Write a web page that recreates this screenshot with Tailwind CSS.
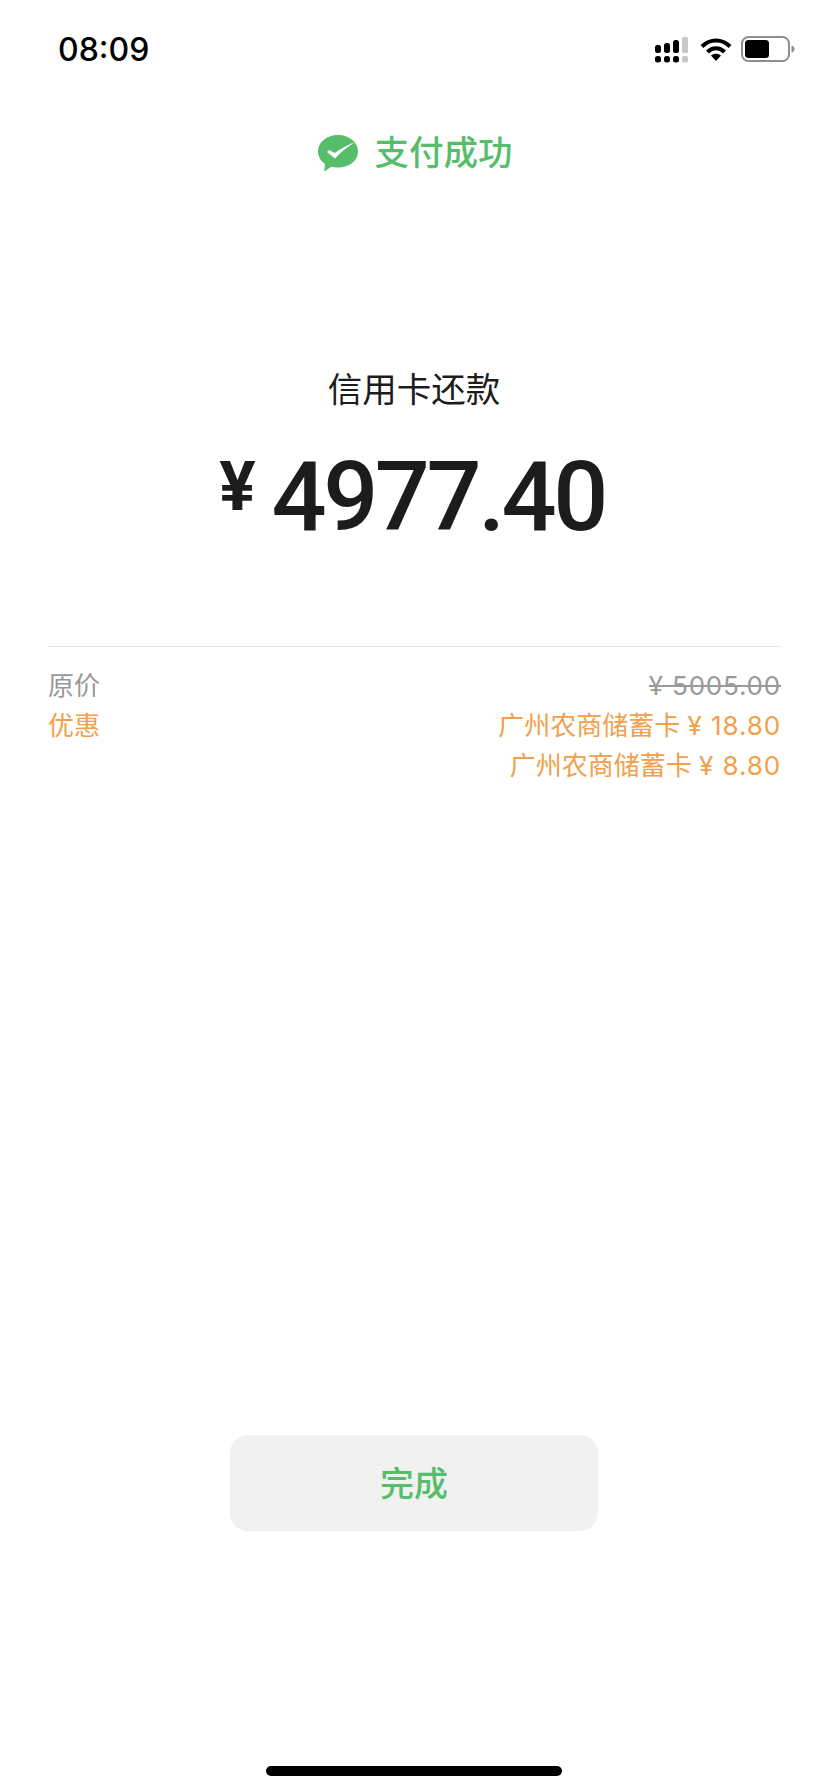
<!DOCTYPE html>
<html lang="zh-CN">
<head>
    <meta charset="UTF-8">
    <meta name="viewport" content="width=device-width, initial-scale=1.0">
    <title>支付成功</title>
    <script src="https://cdn.jsdelivr.net/npm/@tailwindcss/browser@4"></script>
</head>
<body class="bg-white">
    <div class="w-[828px] h-[1792px] flex flex-col overflow-hidden bg-white font-['Inter','Noto_Sans_CJK_SC',sans-serif]">
        <!-- status bar -->
        <div class="h-[100px] pl-[58px] pr-[33px] flex items-start justify-between">
            <span class="mt-[30px] text-[32px] leading-[40px] font-medium text-black">08:09</span>
            <div class="mt-[35px] flex items-center">
                <svg width="33" height="28" viewBox="0 0 33 28" fill="#000">
                    <rect x="0" y="10" width="6" height="8" rx="2.500"/>
                    <rect x="9" y="8" width="6" height="10" rx="2.500"/>
                    <rect x="18" y="5" width="6" height="13" rx="2.500"/>
                    <rect x="27" y="2" width="6" height="16" rx="1.500" fill="#c8c8c8"/>
                    <rect x="0" y="21" width="6" height="6.500" rx="2.500"/>
                    <rect x="9" y="21" width="6" height="6.500" rx="2.500"/>
                    <rect x="18" y="21" width="6" height="6.500" rx="2.500"/>
                    <rect x="27" y="21" width="6" height="6.500" rx="1.500" fill="#c8c8c8"/>
                </svg>
                <svg class="ml-[12px]" width="32" height="24" viewBox="0 0 32 24" fill="none" stroke="#000" stroke-width="4.2">
                    <path d="M2 9.500C10 1.500 22 1.500 30 9.500"/>
                    <path d="M7.500 15C12.500 10 19.500 10 24.500 15"/>
                    <path d="M16 24L11 18.500C14 16 18 16 21 18.500Z" fill="#000" stroke="none"/>
                </svg>
                <svg class="ml-[9px]" width="54" height="26" viewBox="0 0 54 26" fill="none">
                    <rect x="1" y="1" width="47" height="24" rx="6.500" stroke="#8e8e8e" stroke-width="2"/>
                    <rect x="4" y="4" width="24" height="18" rx="3.500" fill="#000"/>
                    <path d="M50.500 9.500C52.500 10 53.500 11.500 53.500 13C53.500 14.500 52.500 16 50.500 16.500Z" fill="#8e8e8e"/>
                </svg>
            </div>
        </div>

        <!-- payment result title -->
        <div class="mt-[31px] pl-[2px] flex items-center justify-center">
            <svg width="40" height="38" viewBox="0 0 40 38">
                <path d="M20 1C31 1 40 8 40 17.500C40 27 31 33.500 20 33.500C17.500 33.500 15.500 33.200 13.500 32.500L7 37C6.500 37.300 6 37 6.200 36.500L7 30C3 27 0 23 0 17.500C0 8 9 1 20 1Z" fill="#56bd6b"/>
                <path d="M9 18L11 16L17 19C22 15 29 11 37 8C29 13 22 19 17 24.500Z" fill="#fff"/>
            </svg>
            <span class="ml-[17px] text-[34.5px] leading-[44px] font-medium text-[#56bd6b]">支付成功</span>
        </div>

        <!-- amount -->
        <div class="mt-[193px] text-center text-[34.5px] leading-[44px] text-[#1c1c1c]">信用卡还款</div>
        <div class="mt-[29px] pr-[4px] h-[112px] flex items-center justify-center">
            <span class="mb-[20px] text-[68px] leading-[60px] font-bold text-[#1c1c1c] font-['Roboto',sans-serif]">¥</span>
            <span class="ml-[16px] text-[97px] leading-[112px] font-medium text-[#1c1c1c] font-['Roboto',sans-serif] tracking-[-3.500px]">4977.40</span>
        </div>

        <!-- price detail -->
        <div class="ml-[48px] mr-[47px] mt-[93px] pt-[19px] border-t border-[#e6e6e6] text-[26px] leading-[40px]">
            <div class="flex justify-between text-[#999999]">
                <span>原价</span>
                <span class="line-through tracking-[0.8px]">¥ 5005.00</span>
            </div>
            <div class="flex justify-between text-[#f2a04b]">
                <span>优惠</span>
                <div class="text-right">
                    <div>广州农商储蓄卡 <span class="tracking-[0.9px]">¥ 18.80</span></div>
                    <div>广州农商储蓄卡 <span class="tracking-[0.9px]">¥ 8.80</span></div>
                </div>
            </div>
        </div>

        <div class="flex-1"></div>

        <!-- done button -->
        <button class="self-center w-[368px] h-[96px] rounded-[18px] bg-[#f1f1f1] text-[34px] font-medium text-[#56bd6b]">完成</button>

        <!-- home indicator -->
        <div class="mt-[235px] mb-[16px] self-center w-[296px] h-[10px] rounded-full bg-black"></div>
    </div>
</body>
</html>
